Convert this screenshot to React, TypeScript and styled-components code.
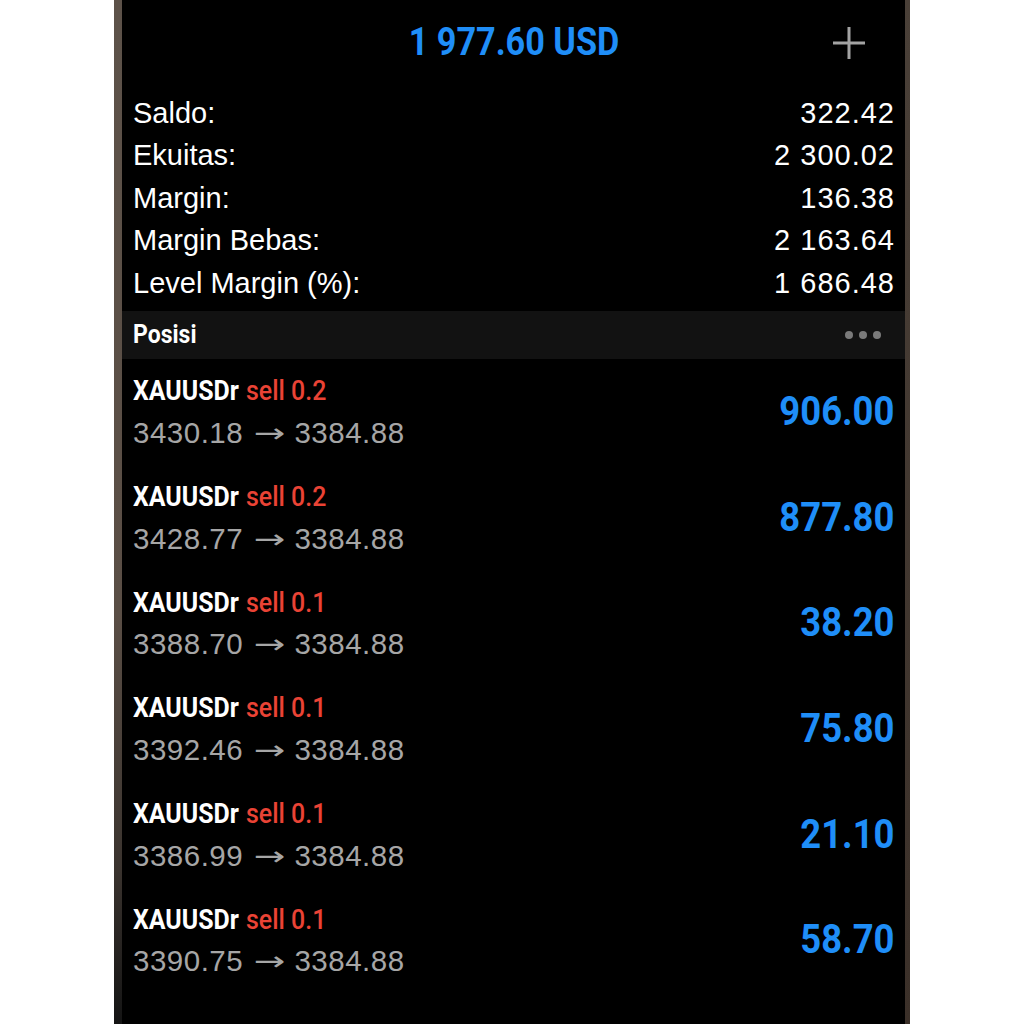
import React from 'react';
import styled, { createGlobalStyle } from 'styled-components';

const GlobalStyle = createGlobalStyle`
  html, body {
    margin: 0;
    padding: 0;
    background: #ffffff;
    overflow: hidden;
  }
  body {
    font-family: "Liberation Sans", Arial, sans-serif;
  }
`;

// no condensed face installed, so the bold headings get squeezed with scaleX
const CONDENSED = `Roboto, "Liberation Sans", sans-serif`;

interface Position {
  symbol: string;
  side: string;
  volume: string;
  open: string;
  current: string;
  profit: string;
}

const summary = [
  { label: 'Saldo:', value: '322.42' },
  { label: 'Ekuitas:', value: '2 300.02' },
  { label: 'Margin:', value: '136.38' },
  { label: 'Margin Bebas:', value: '2 163.64' },
  { label: 'Level Margin (%):', value: '1 686.48' },
];

const positions: Position[] = [
  { symbol: 'XAUUSDr', side: 'sell', volume: '0.2', open: '3430.18', current: '3384.88', profit: '906.00' },
  { symbol: 'XAUUSDr', side: 'sell', volume: '0.2', open: '3428.77', current: '3384.88', profit: '877.80' },
  { symbol: 'XAUUSDr', side: 'sell', volume: '0.1', open: '3388.70', current: '3384.88', profit: '38.20' },
  { symbol: 'XAUUSDr', side: 'sell', volume: '0.1', open: '3392.46', current: '3384.88', profit: '75.80' },
  { symbol: 'XAUUSDr', side: 'sell', volume: '0.1', open: '3386.99', current: '3384.88', profit: '21.10' },
  { symbol: 'XAUUSDr', side: 'sell', volume: '0.1', open: '3390.75', current: '3384.88', profit: '58.70' },
];

const Page = styled.div`
  display: flex;
  height: 100vh;
  padding-left: 114px;
`;

const Phone = styled.div`
  display: flex;
  width: 796px;
  height: 100%;
`;

const Bezel = styled.div<{ $side: 'left' | 'right' }>`
  flex: 0 0 ${p => (p.$side === 'left' ? '8px' : '5px')};
  background: ${p =>
    p.$side === 'left'
      ? 'linear-gradient(180deg, #5d5249 0%, #5a4e45 60%, #3a332e 85%, #141414 100%)'
      : 'linear-gradient(180deg, #4a4038 0%, #3b3029 100%)'};
`;

const Screen = styled.div`
  flex: 1;
  background: #000000;
  display: flex;
  flex-direction: column;
  color: #ffffff;
  overflow: hidden;
`;

const Header = styled.div`
  position: relative;
  height: 84px;
  display: flex;
  align-items: center;
  justify-content: center;
`;

const Balance = styled.div`
  font-family: ${CONDENSED};
  font-weight: 700;
  font-size: 38px;
  color: #1f8ef8;
  transform: scaleX(0.9);
  transform-origin: center;
`;

const AddButton = styled.div`
  position: absolute;
  right: 39px;
  top: 26px;
  width: 34px;
  height: 34px;
  display: flex;
`;

const Summary = styled.div`
  padding: 8px 11px 6px;
  display: flex;
  flex-direction: column;
`;

const SummaryRow = styled.div`
  height: 42.5px;
  display: flex;
  align-items: center;
  justify-content: space-between;
  font-size: 29px;
  color: #ffffff;
`;

const SummaryValue = styled.span`
  letter-spacing: 1px;
  margin-right: -1px;
`;

const SectionBar = styled.div`
  height: 48px;
  background: #121212;
  display: flex;
  align-items: center;
  justify-content: space-between;
  padding: 0 11px;
`;

const SectionTitle = styled.div`
  font-family: ${CONDENSED};
  font-weight: 700;
  font-size: 25px;
  color: #ffffff;
  transform: scaleX(0.92);
  transform-origin: left center;
`;

const Dots = styled.div`
  display: flex;
  gap: 6px;
  margin-right: 13px;
  span {
    width: 8px;
    height: 8px;
    border-radius: 50%;
    background: #7a7a7a;
  }
`;

const PositionList = styled.div`
  display: flex;
  flex-direction: column;
`;

const PositionRow = styled.div`
  height: 105.7px;
  padding: 0 11px;
  display: flex;
  align-items: center;
  justify-content: space-between;
  box-sizing: border-box;
`;

const Info = styled.div`
  display: flex;
  flex-direction: column;
  margin-top: 2px;
`;

const SymbolLine = styled.div`
  height: 41px;
  display: flex;
  align-items: center;
  gap: 8px;
  font-family: ${CONDENSED};
  font-size: 28px;
  font-weight: 700;
  transform: scaleX(0.89);
  transform-origin: left center;
`;

const Symbol = styled.span`
  color: #ffffff;
`;

const Side = styled.span`
  color: #ea4335;
  font-weight: 500;
`;

const PriceLine = styled.div`
  height: 43px;
  display: flex;
  align-items: center;
  font-size: 29.5px;
  color: #a6a6a6;
  letter-spacing: 0.5px;
`;

const Arrow = styled.span`
  display: inline-block;
  font-family: "DejaVu Sans", sans-serif;
  font-size: 26px;
  margin: 0 13px 0 16px;
  color: #a6a6a6;
  transform: scaleX(1.45);
  transform-origin: center;
`;

const Profit = styled.div`
  font-family: ${CONDENSED};
  font-weight: 700;
  font-size: 40px;
  color: #1f8ef8;
  transform: scaleX(0.91);
  transform-origin: right center;
`;

const PlusIcon = () => (
  <svg width="34" height="34" viewBox="0 0 34 34">
    <path d="M17 1 V33 M1 17 H33" stroke="#a3a3a3" strokeWidth="3" fill="none" />
  </svg>
);

export default function App() {
  return (
    <>
      <GlobalStyle />
      <Page>
        <Phone>
          <Bezel $side="left" />
          <Screen>
            <Header>
              <Balance>1 977.60 USD</Balance>
              <AddButton>
                <PlusIcon />
              </AddButton>
            </Header>

            <Summary>
              {summary.map(row => (
                <SummaryRow key={row.label}>
                  <span>{row.label}</span>
                  <SummaryValue>{row.value}</SummaryValue>
                </SummaryRow>
              ))}
            </Summary>

            <SectionBar>
              <SectionTitle>Posisi</SectionTitle>
              <Dots>
                <span />
                <span />
                <span />
              </Dots>
            </SectionBar>

            <PositionList>
              {positions.map((p, i) => (
                <PositionRow key={i}>
                  <Info>
                    <SymbolLine>
                      <Symbol>{p.symbol}</Symbol>
                      <Side>
                        {p.side} {p.volume}
                      </Side>
                    </SymbolLine>
                    <PriceLine>
                      {p.open}
                      <Arrow>→</Arrow>
                      {p.current}
                    </PriceLine>
                  </Info>
                  <Profit>{p.profit}</Profit>
                </PositionRow>
              ))}
            </PositionList>
          </Screen>
          <Bezel $side="right" />
        </Phone>
      </Page>
    </>
  );
}
